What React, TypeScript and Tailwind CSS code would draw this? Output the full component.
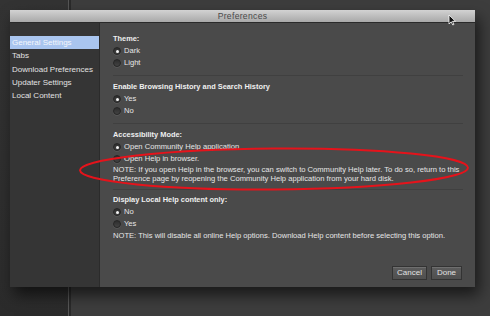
import React from "react";

const font = { fontFamily: '"Liberation Sans", Arial, sans-serif' };

function Radio({ label, checked }: { label: string; checked?: boolean }) {
    return (
        <div className="flex items-center h-[12px]">
            <div className="w-[8px] h-[8px] rounded-full bg-gradient-to-b from-[#2e2e2e] to-[#434343] border border-[#262626] shadow-[0_0.5px_0_rgba(255,255,255,0.15)] flex items-center justify-center mr-[3px]">
                {checked && <div className="w-[3px] h-[3px] rounded-full bg-[#f4f4f4]"></div>}
            </div>
            <span className="text-[#e6e6e6]">{label}</span>
        </div>
    );
}

function Heading({ children }: { children: React.ReactNode }) {
    return <div className="h-[12px] leading-[12px] font-bold text-[7.4px] text-[#efefef]">{children}</div>;
}

function Cursor() {
    return (
        <svg width="9" height="12" viewBox="0 0 9 12" className="absolute left-[448px] top-[14px]">
            <path d="M1 1 L1 10 L3.2 7.8 L4.8 11 L6 10.4 L4.5 7.3 L7.5 7.3 Z" fill="#111" stroke="#fff" strokeWidth="0.8" />
        </svg>
    );
}

function Ellipse() {
    return (
        <svg width="490" height="316" className="absolute left-0 top-0 pointer-events-none">
            <ellipse cx="274" cy="169" rx="194" ry="20.5" fill="none" stroke="#e5131b" strokeWidth="2" transform="rotate(-0.4 274 169)" />
        </svg>
    );
}

export default function App() {
    const sidebar = ["General Settings", "Tabs", "Download Preferences", "Updater Settings", "Local Content"];

    return (
        <div className="relative w-[490px] h-[316px] overflow-hidden bg-[#3c3c3c] text-[7.6px]" style={font}>
            {/* desktop behind the dialog */}
            <div className="absolute inset-0 flex">
                <div className="w-[68px] h-full bg-gradient-to-b from-[#333] to-[#2b2b2b]"></div>
                <div className="w-[1px] h-full bg-[#565656]"></div>
                <div className="w-[2px] h-full bg-[#2a2a2a]"></div>
                <div className="flex-1 h-full bg-[#3d3d3d]"></div>
            </div>

            {/* dialog */}
            <div className="absolute left-[10px] top-[10px] w-[465px] h-[277px] flex flex-col shadow-[4px_8px_14px_rgba(0,0,0,0.6)]">
                <div className="h-[13px] bg-gradient-to-b from-[#d2d2d2] to-[#a9a9a9] border-b border-[#2a2a2a] flex items-center justify-center">
                    <span className="text-[#4a4a4a] text-[8.6px] tracking-[0.3px]">Preferences</span>
                </div>
                <div className="flex flex-1">
                    <div className="w-[90px] bg-[#353535] border-r border-[#2b2b2b] pt-[13px] text-[8px]">
                        {sidebar.map((s, i) => (
                            <div
                                key={s}
                                className={
                                    i === 0
                                        ? "h-[13.3px] leading-[13.3px] pl-[2px] bg-[#a9c5ef] text-[#f4f7fc]"
                                        : "h-[13.3px] leading-[13.3px] pl-[2px] text-[#e2e2e2]"
                                }
                            >
                                {s}
                            </div>
                        ))}
                    </div>

                    <div className="flex-1 bg-[#4a4a4a] pl-[13px] pr-[12px] pt-[10px] pb-[7px] flex flex-col">
                        <div className="pb-[6px] border-b border-[#404040]">
                            <Heading>Theme:</Heading>
                            <Radio label="Dark" checked />
                            <Radio label="Light" />
                        </div>
                        <div className="pt-[5px] pb-[6px] border-b border-[#404040]">
                            <Heading>Enable Browsing History and Search History</Heading>
                            <Radio label="Yes" checked />
                            <Radio label="No" />
                        </div>
                        <div className="pt-[5px] pb-[6px] border-b border-[#404040]">
                            <Heading>Accessibility Mode:</Heading>
                            <Radio label="Open Community Help application" checked />
                            <Radio label="Open Help in browser." />
                            <div className="text-[#e6e6e6] leading-[8.5px] mt-[1px] whitespace-nowrap">
                                NOTE: If you open Help in the browser, you can switch to Community Help later. To do so, return to this
                                <br />
                                Preference page by reopening the Community Help application from your hard disk.
                            </div>
                        </div>
                        <div className="pt-[4px]">
                            <Heading>Display Local Help content only:</Heading>
                            <Radio label="No" checked />
                            <Radio label="Yes" />
                            <div className="text-[#e6e6e6] h-[12px] leading-[12px] whitespace-nowrap">
                                NOTE: This will disable all online Help options. Download Help content before selecting this option.
                            </div>
                        </div>
                        <div className="mt-auto flex justify-end gap-[4px] pr-[1px]">
                            <button className="w-[35px] h-[14px] bg-gradient-to-b from-[#5c5c5c] to-[#4f4f4f] border border-[#333] text-[#e2e2e2] text-[8px] shadow-[inset_0_1px_0_rgba(255,255,255,0.12)]">
                                Cancel
                            </button>
                            <button className="w-[31px] h-[14px] bg-gradient-to-b from-[#5c5c5c] to-[#4f4f4f] border border-[#333] text-[#e2e2e2] text-[8px] shadow-[inset_0_1px_0_rgba(255,255,255,0.12)]">
                                Done
                            </button>
                        </div>
                    </div>
                </div>
            </div>

            <Ellipse />
            <Cursor />
        </div>
    );
}
